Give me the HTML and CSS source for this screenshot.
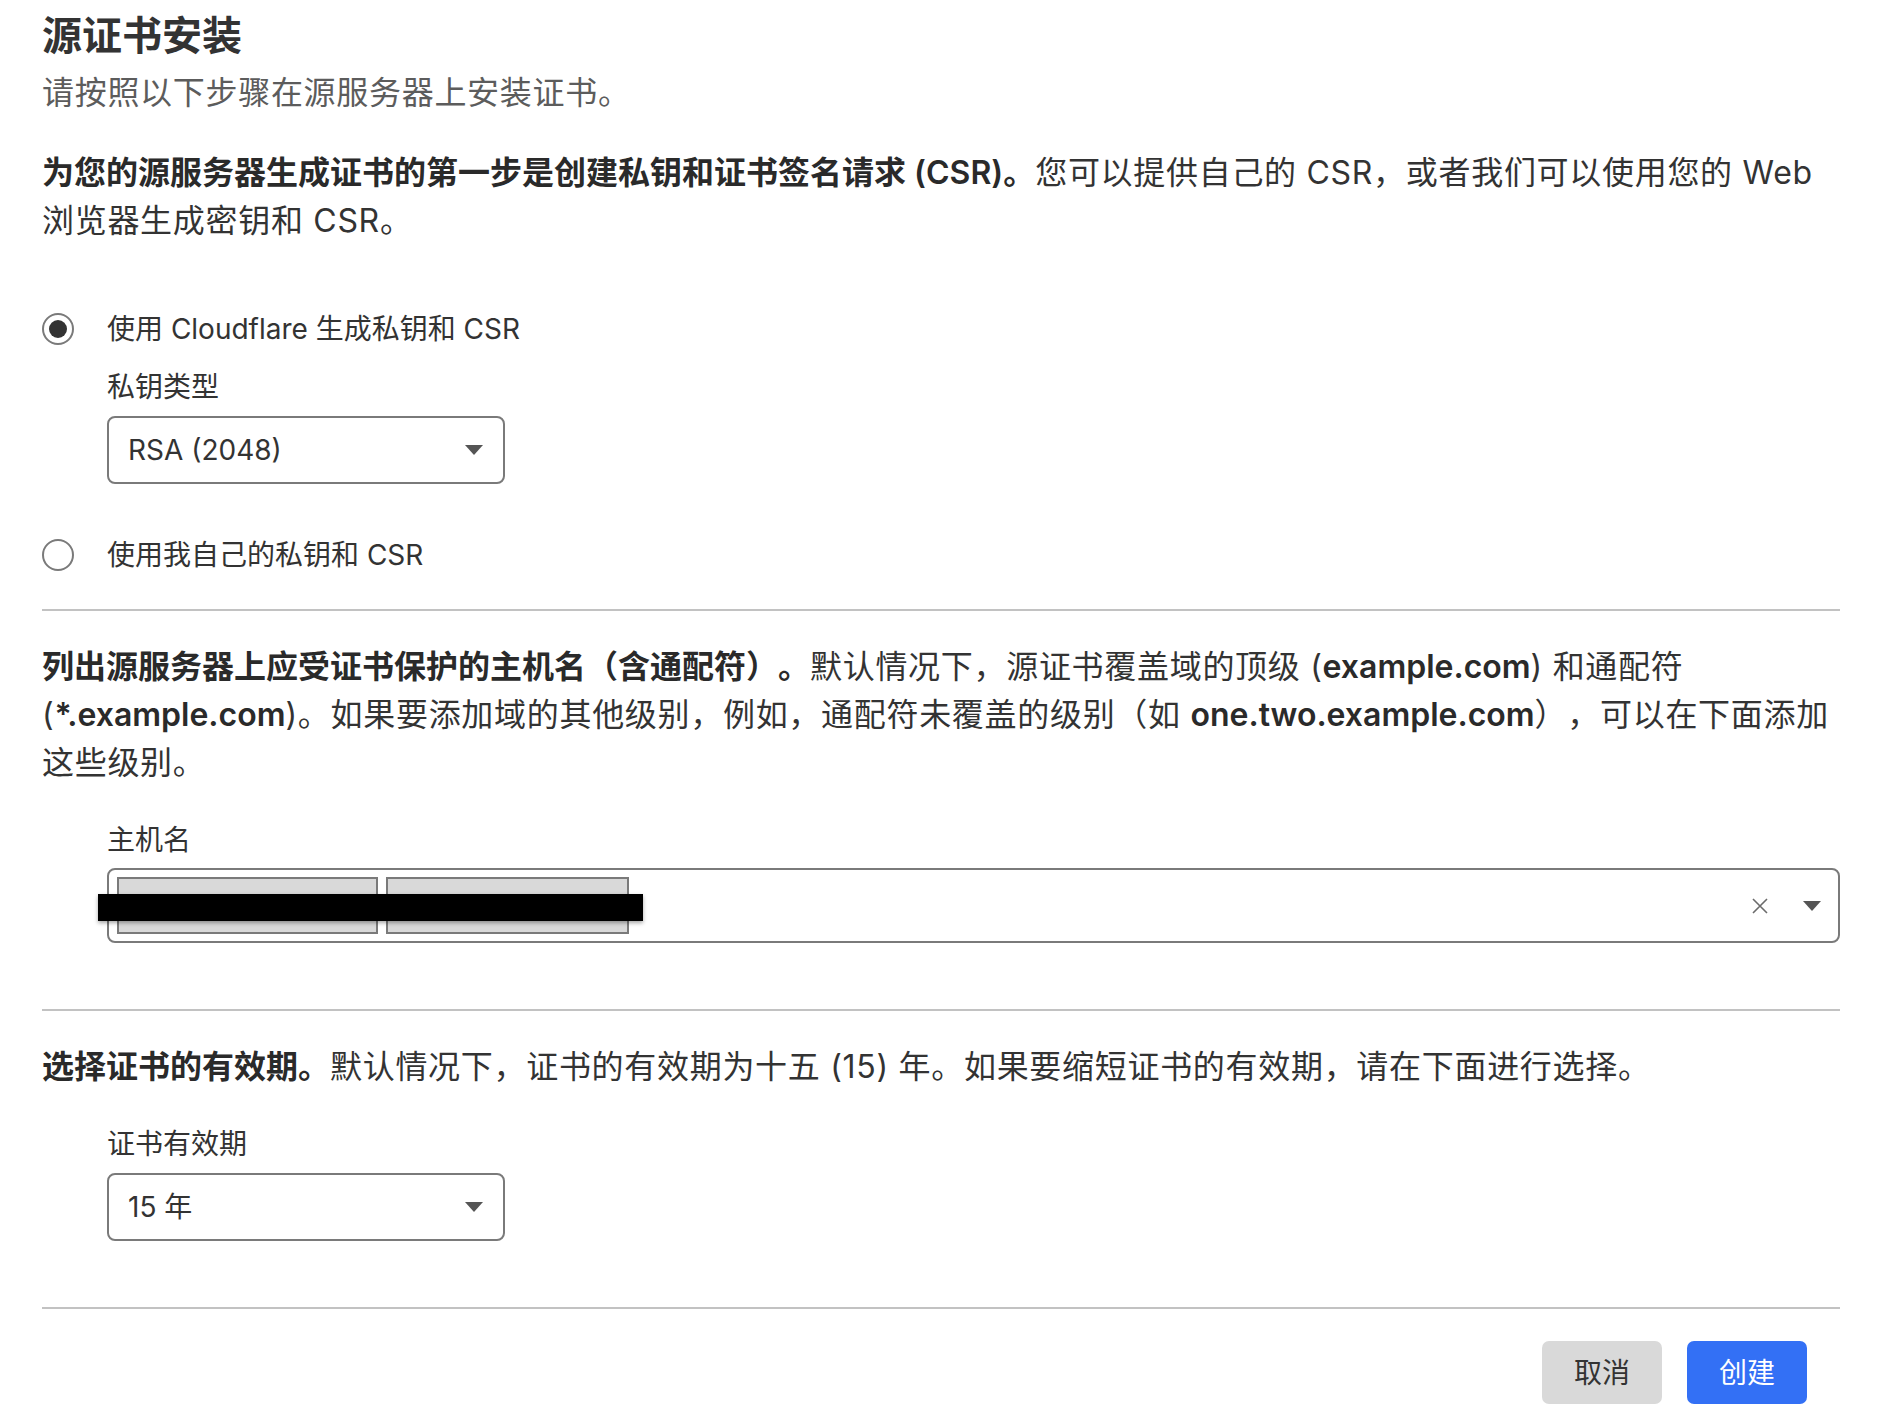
FILE: index.html
```html
<!DOCTYPE html>
<html lang="zh-CN">
<head>
<meta charset="utf-8">
<title>源证书安装</title>
<link rel="stylesheet" href="styles.css">
</head>
<body>
<div class="page">
  <h1 class="title">源证书安装</h1>
  <p class="subtitle">请按照以下步骤在源服务器上安装证书。</p>

  <section class="section">
    <p class="para"><b>为您的源服务器生成证书的第一步是创建私钥和证书签名请求 (CSR)。</b>您可以提供自己的 CSR，或者我们可以使用您的 Web 浏览器生成密钥和 CSR。</p>
    <div class="options">
      <div class="radio-row">
        <span class="radio checked"></span>
        <span class="radio-label">使用 Cloudflare 生成私钥和 CSR</span>
      </div>
      <div class="field field-nested">
        <span class="field-label">私钥类型</span>
        <div class="select">
          <span class="select-value">RSA (2048)</span>
          <span class="caret"></span>
        </div>
      </div>
      <div class="radio-row radio-row-second">
        <span class="radio"></span>
        <span class="radio-label">使用我自己的私钥和 CSR</span>
      </div>
    </div>
  </section>

  <hr class="divider">

  <section class="section">
    <p class="para"><b>列出源服务器上应受证书保护的主机名（含通配符）。</b>默认情况下，源证书覆盖域的顶级 (<b>example.com</b>) 和通配符 (<b>*.example.com</b>)。如果要添加域的其他级别，例如，通配符未覆盖的级别（如 <b>one.two.example.com</b>），可以在下面添加这些级别。</p>
    <div class="field">
      <span class="field-label">主机名</span>
      <div class="multi">
        <div class="chips">
          <span class="chip chip-a"></span>
          <span class="chip chip-b"></span>
          <span class="redact"></span>
        </div>
        <div class="multi-controls">
          <svg class="clear" width="18" height="18" viewBox="0 0 18 18" aria-hidden="true">
            <path d="M2 2 L16 16 M16 2 L2 16" stroke="#6b6b6b" stroke-width="1.6" fill="none"/>
          </svg>
          <span class="caret"></span>
        </div>
      </div>
    </div>
  </section>

  <hr class="divider">

  <section class="section">
    <p class="para"><b>选择证书的有效期。</b>默认情况下，证书的有效期为十五 (15) 年。如果要缩短证书的有效期，请在下面进行选择。</p>
    <div class="field">
      <span class="field-label">证书有效期</span>
      <div class="select">
        <span class="select-value">15 年</span>
        <span class="caret"></span>
      </div>
    </div>
  </section>

  <hr class="divider">

  <div class="actions">
    <button class="btn btn-cancel" type="button">取消</button>
    <button class="btn btn-primary" type="button">创建</button>
  </div>
</div>
</body>
</html>
```

FILE: styles.css
```css
* {
  box-sizing: border-box;
}

html,
body {
  margin: 0;
  background: #ffffff;
}

body {
  font-family: "Inter", "Noto Sans CJK SC", sans-serif;
  font-size: 32px;
  line-height: 48px;
  color: #333333;
  text-spacing-trim: space-all;
}

.page {
  padding: 8px 60px 0 42px;
}

.title {
  margin: 0;
  font-size: 40px;
  line-height: 56px;
  font-weight: 600;
  color: #333333;
}

.subtitle {
  margin: 5px 0 0;
  color: #5c5c5c;
  letter-spacing: 0.7px;
}

.section {
  padding-top: 32px;
}

.para {
  margin: 0;
  letter-spacing: 0.7px;
}

.para b {
  font-weight: 600;
  color: #2a2a2a;
  letter-spacing: 0;
}

.options {
  margin-top: 60px;
}

.radio-row {
  display: flex;
  align-items: center;
  gap: 33px;
  height: 48px;
  font-size: 28px;
}

.radio-row-second {
  margin-top: 47px;
}

.radio {
  flex: none;
  width: 32px;
  height: 32px;
  border: 2px solid #7a7a7a;
  border-radius: 50%;
  display: flex;
  align-items: center;
  justify-content: center;
}

.radio.checked::after {
  content: "";
  width: 18px;
  height: 18px;
  border-radius: 50%;
  background: #333333;
}

.field {
  margin: 29px 0 0 65px;
  font-size: 28px;
}

.field-nested {
  margin-top: 10px;
}

.field-label {
  display: block;
  line-height: 48px;
}

.select {
  margin-top: 5px;
  width: 398px;
  height: 68px;
  border: 2px solid #7a7a7a;
  border-radius: 8px;
  display: flex;
  align-items: center;
  justify-content: space-between;
  padding: 0 20px 0 19px;
}

.caret {
  width: 0;
  height: 0;
  border-left: 9px solid transparent;
  border-right: 9px solid transparent;
  border-top: 10px solid #555555;
}

.multi {
  position: relative;
  margin-top: 4px;
  height: 75px;
  border: 2px solid #7a7a7a;
  border-radius: 8px;
  display: flex;
  align-items: center;
  justify-content: space-between;
  padding: 0 17px 0 8px;
}

.chips {
  position: relative;
  display: flex;
  gap: 8px;
}

.chip {
  height: 57px;
  background: #d9d9d9;
  border: 2px solid #7a7a7a;
}

.chip-a {
  width: 261px;
}

.chip-b {
  width: 243px;
}

.redact {
  position: absolute;
  left: -19px;
  top: 17px;
  width: 545px;
  height: 27px;
  background: #000000;
  box-shadow: 0 2px 4px rgba(0, 0, 0, 0.35);
}

.multi-controls {
  display: flex;
  align-items: center;
  gap: 34px;
}

.clear {
  display: block;
}

.divider {
  margin: 66px 0 0;
  border: 0;
  height: 2px;
  background: #c2c2c2;
}

.section:first-of-type + .divider {
  margin-top: 30px;
}

.actions {
  margin-top: 32px;
  display: flex;
  justify-content: flex-end;
  gap: 25px;
  padding-right: 33px;
}

.btn {
  width: 120px;
  height: 63px;
  border: 0;
  border-radius: 7px;
  font-family: "Inter", "Noto Sans CJK SC", sans-serif;
  font-size: 28px;
  line-height: 48px;
  padding: 0;
}

.btn-cancel {
  background: #d9d9d9;
  color: #333333;
}

.btn-primary {
  background: #3370f5;
  color: #ffffff;
}
```
